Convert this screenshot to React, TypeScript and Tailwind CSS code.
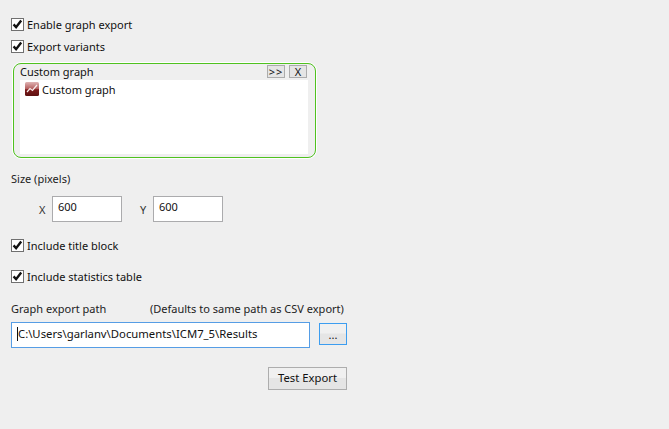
import React from "react";

function Check({ label, className = "" }: { label: string; className?: string }) {
  return (
    <div className={"flex items-center h-[13px] " + className}>
      <div className="w-[13px] h-[13px] border border-[#707070] bg-white flex items-center justify-center shrink-0">
        <svg width="11" height="11" viewBox="0 0 11 11">
          <path d="M1.6 5.4 L4.1 8.2 L9.2 1.6" fill="none" stroke="#111" strokeWidth="2.4" />
        </svg>
      </div>
      <span className="ml-[3px] text-[11px] leading-[13px] text-[#111] whitespace-nowrap">{label}</span>
    </div>
  );
}

function SmallBtn({ children, className = "" }: { children: React.ReactNode; className?: string }) {
  return (
    <div className={"h-[13px] w-[18px] border border-[#acacac] bg-[#e5e5e5] flex items-center justify-center text-[11px] leading-none text-[#111] " + className}>
      {children}
    </div>
  );
}

function NumField({ label, className = "" }: { label: string; className?: string }) {
  return (
    <div className={"flex items-center " + className}>
      <span className="w-[13px] mt-[1px] text-[11px] leading-[13px] text-[#333]">{label}</span>
      <div className="w-[70px] h-[26px] border border-[#ababad] bg-white pl-[5px] pt-[3px] text-[11px] leading-[14px] text-[#111]">600</div>
    </div>
  );
}

export default function App() {
  return (
    <div className="w-[669px] h-[429px] bg-[#efefef] pl-[11px] pt-[18px] flex flex-col font-['Noto_Sans',sans-serif] overflow-hidden">
      <Check label="Enable graph export" />
      <Check label="Export variants" className="mt-[9px]" />

      <div className="mt-[10px] ml-[2px] w-[303px] h-[95px] rounded-[8px] border border-[#4fc21f] shadow-[0_0_0_1px_#ffffff] flex flex-col pl-[6px]">
        <div className="h-[16px] flex items-start justify-between pr-[8px] shrink-0 overflow-hidden">
          <span className="text-[11px] leading-[14px] text-[#111] mt-[1px]">Custom graph</span>
          <div className="flex gap-[4px] mt-[1px]">
            <SmallBtn className="tracking-[1px]">&gt;&gt;</SmallBtn>
            <SmallBtn>X</SmallBtn>
          </div>
        </div>
        <div className="w-[288px] h-[74px] bg-white flex items-start pl-[5px] pt-[2px]">
          <svg width="14" height="14" viewBox="0 0 14 14" className="shrink-0">
            <defs>
              <linearGradient id="g" x1="0" y1="0" x2="0" y2="1">
                <stop offset="0" stopColor="#e0b4b4" />
                <stop offset="0.5" stopColor="#b35c5c" />
                <stop offset="0.55" stopColor="#7c1a1a" />
                <stop offset="1" stopColor="#5e1010" />
              </linearGradient>
            </defs>
            <rect x="0" y="0" width="14" height="14" rx="1.5" fill="url(#g)" />
            <path d="M2 10 L5 6.5 L7.5 8.5 L12 3" fill="none" stroke="#f8eeee" strokeWidth="1.2" />
          </svg>
          <span className="ml-[3px] mt-[1px] text-[11px] leading-[14px] text-[#111]">Custom graph</span>
        </div>
      </div>

      <div className="mt-[14px] text-[11px] leading-[13px] text-[#222]">Size (pixels)</div>

      <div className="mt-[11px] ml-[28px] flex">
        <NumField label="X" />
        <NumField label="Y" className="ml-[18px]" />
      </div>

      <Check label="Include title block" className="mt-[17px]" />
      <Check label="Include statistics table" className="mt-[18px]" />

      <div className="mt-[19px] flex text-[11px] leading-[14px] text-[#222] whitespace-nowrap">
        <span className="w-[139px]">Graph export path</span>
        <span>(Defaults to same path as CSV export)</span>
      </div>

      <div className="mt-[6px] flex items-start">
        <div className="w-[299px] h-[26px] border border-[#569de5] bg-white pl-[5px] pb-[2px] flex items-center text-[11.3px] leading-[14px] text-[#111]">
          <span className="border-l border-[#111] h-[14px] leading-[14px]">C:\Users\garlanv\Documents\ICM7_5\Results</span>
        </div>
        <div className="ml-[9px] mt-[1px] w-[28px] h-[22px] border border-[#3c9df0] bg-[linear-gradient(#f0f0f0,#f0f0f0_45%,#e5e5e5_50%,#e5e5e5)] flex items-center justify-center text-[11px] leading-none text-[#111]">...</div>
      </div>

      <div className="mt-[19px] ml-[257px] w-[79px] h-[23px] border border-[#adadad] bg-[linear-gradient(#f0f0f0,#f0f0f0_45%,#e5e5e5_50%,#e5e5e5)] pb-[1px] flex items-center justify-center text-[11.3px] leading-none text-[#111]">Test Export</div>
    </div>
  );
}
